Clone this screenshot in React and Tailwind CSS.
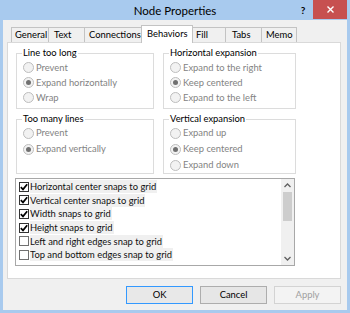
import React from 'react';

const tabs = [
  { name: 'General', w: 'w-[38px]', pl: 'pl-[3px]' },
  { name: 'Text', w: 'w-[37px]', pl: 'pl-[5px]' },
  { name: 'Connections', w: 'w-[58px]', pl: 'pl-[4px]' },
  { name: 'Behaviors', w: 'w-[52px]', pl: 'pl-[5px]', active: true },
  { name: 'Fill', w: 'w-[34px]', pl: 'pl-[3px]' },
  { name: 'Tabs', w: 'w-[37px]', pl: 'pl-[6px]' },
  { name: 'Memo', w: 'w-[36px]', pl: 'pl-[4px]' },
];

const snaps = [
  { label: 'Horizontal center snaps to grid', on: true },
  { label: 'Vertical center snaps to grid', on: true },
  { label: 'Width snaps to grid', on: true },
  { label: 'Height snaps to grid', on: true },
  { label: 'Left and right edges snap to grid', on: false },
  { label: 'Top and bottom edges snap to grid', on: false },
];

function Radio({ label, checked, rowH }) {
  return (
    <div className={`flex items-center ${rowH}`}>
      <span className="w-[11px] h-[11px] rounded-full border border-[#bdbdbd] bg-[#f2f2f2] flex items-center justify-center shrink-0">
        {checked && <span className="w-[5px] h-[5px] rounded-full bg-[#707070]" />}
      </span>
      <span className="ml-[2px] text-[#838383]">{label}</span>
    </div>
  );
}

function Group({ title, h, rowsTop, children }) {
  return (
    <div className={`border border-[#dcdcdc] ${h}`}>
      <div className="-mt-[7px] ml-[5px] w-fit bg-white px-[1px] leading-[12px] text-black">{title}</div>
      <div className={`pl-[6px] ${rowsTop}`}>{children}</div>
    </div>
  );
}

function Check({ on }) {
  return (
    <span className={`w-[10px] h-[10px] border bg-white flex items-center justify-center shrink-0 ${on ? 'border-[#333]' : 'border-[#707070]'}`}>
      {on && (
        <svg width="8" height="8" viewBox="0 0 8 8">
          <path d="M0.8 4.2 L3 6.4 L7.2 1.2" fill="none" stroke="#000" strokeWidth="1.7" />
        </svg>
      )}
    </span>
  );
}

export default function App() {
  return (
    <div className="w-[350px] h-[313px] bg-[#a8caee] flex flex-col font-['Lato',sans-serif] text-[9.4px] leading-[12px] text-black overflow-hidden">
      {/* title bar */}
      <div className="h-[20px] grid grid-cols-[1fr_auto_1fr] items-start shrink-0">
        <div />
        <div className="pt-[4px] text-[11.5px] leading-[14px] text-black">Node Properties</div>
        <div className="flex justify-end pr-[3px]">
          <div className="w-[20px] pt-[4px] text-center text-[10px] leading-[12px] font-bold text-black">?</div>
          <div className="w-[34px] h-[19px] bg-[#c75050] flex items-center justify-center">
            <svg width="7" height="7" viewBox="0 0 7 7">
              <path d="M0.5 0.5 L6.5 6.5 M6.5 0.5 L0.5 6.5" stroke="#fff" strokeWidth="1.4" />
            </svg>
          </div>
        </div>
      </div>

      {/* client area */}
      <div className="mx-[3px] mb-[3px] flex-1 bg-[#f0f0f0] flex flex-col px-[4px] pt-[5px]">
        {/* tab strip */}
        <div className="h-[17px] flex items-end pl-[4px]">
          {tabs.map((t) =>
            t.active ? (
              <div
                key={t.name}
                className={`${t.w} ${t.pl} h-[18px] -mb-px -mr-px relative z-10 bg-white border border-b-0 border-[#c3c3c3] pt-[2px] whitespace-nowrap`}
              >
                {t.name}
              </div>
            ) : (
              <div
                key={t.name}
                className={`${t.w} ${t.pl} h-[15px] -mr-px bg-[#f0f0f0] border border-b-0 border-[#c3c3c3] pt-[1px] whitespace-nowrap`}
              >
                {t.name}
              </div>
            )
          )}
        </div>

        {/* tab panel */}
        <div className="h-[237px] w-[334px] bg-white border border-[#d9d9d9] pl-[8px] pt-[10px]">
          <div className="flex gap-[9px]">
            <div className="w-[138px] flex flex-col gap-[10px]">
              <Group title="Line too long" h="h-[56px]" rowsTop="mt-[1px]">
                <Radio label="Prevent" rowH="h-[15px]" />
                <Radio label="Expand horizontally" rowH="h-[15px]" checked />
                <Radio label="Wrap" rowH="h-[15px]" />
              </Group>
              <Group title="Too many lines" h="h-[55px]" rowsTop="mt-0">
                <Radio label="Prevent" rowH="h-[16px]" />
                <Radio label="Expand vertically" rowH="h-[16px]" checked />
              </Group>
            </div>
            <div className="w-[133px] flex flex-col gap-[10px]">
              <Group title="Horizontal expansion" h="h-[56px]" rowsTop="mt-[1px]">
                <Radio label="Expand to the right" rowH="h-[15px]" />
                <Radio label="Keep centered" rowH="h-[15px]" checked />
                <Radio label="Expand to the left" rowH="h-[15px]" />
              </Group>
              <Group title="Vertical expansion" h="h-[55px]" rowsTop="mt-0">
                <Radio label="Expand up" rowH="h-[16px]" />
                <Radio label="Keep centered" rowH="h-[16px]" checked />
                <Radio label="Expand down" rowH="h-[16px]" />
              </Group>
            </div>
          </div>

          {/* checked list box */}
          <div className="mt-[4px] -ml-px w-[280px] h-[88px] border border-[#a8a8a8] flex">
            <div className="flex-1 pt-px">
              {snaps.map((s) => (
                <div key={s.label} className="h-[13.6px] flex items-center pl-[3px]">
                  <Check on={s.on} />
                  <span className="ml-px bg-[#f0f0f0] pr-px leading-[13px] text-[#111]">{s.label}</span>
                </div>
              ))}
            </div>
            <div className="w-[13px] bg-[#f0f0f0] flex flex-col">
              <div className="h-[13px] flex items-center justify-center">
                <svg width="7" height="5" viewBox="0 0 7 5">
                  <path d="M0.5 4 L3.5 1 L6.5 4" fill="none" stroke="#606060" strokeWidth="1.3" />
                </svg>
              </div>
              <div className="mx-[2px] h-[29px] bg-[#cdcdcd]" />
              <div className="flex-1" />
              <div className="h-[13px] flex items-center justify-center">
                <svg width="7" height="5" viewBox="0 0 7 5">
                  <path d="M0.5 1 L3.5 4 L6.5 1" fill="none" stroke="#606060" strokeWidth="1.3" />
                </svg>
              </div>
            </div>
          </div>
        </div>

        {/* buttons */}
        <div className="mt-[7px] flex justify-end gap-[7px] pr-[2px]">
          <button className="w-[67px] h-[18px] border border-[#3399ff] bg-[#e8e8e8] text-[9.4px] leading-[12px] text-black">OK</button>
          <button className="w-[67px] h-[18px] border border-[#adadad] bg-[#e6e6e6] text-[9.4px] leading-[12px] text-black">Cancel</button>
          <button className="w-[67px] h-[18px] border border-[#d3d3d3] bg-[#f3f3f3] text-[9.4px] leading-[12px] text-[#a0a0a0]">Apply</button>
        </div>
      </div>
    </div>
  );
}
